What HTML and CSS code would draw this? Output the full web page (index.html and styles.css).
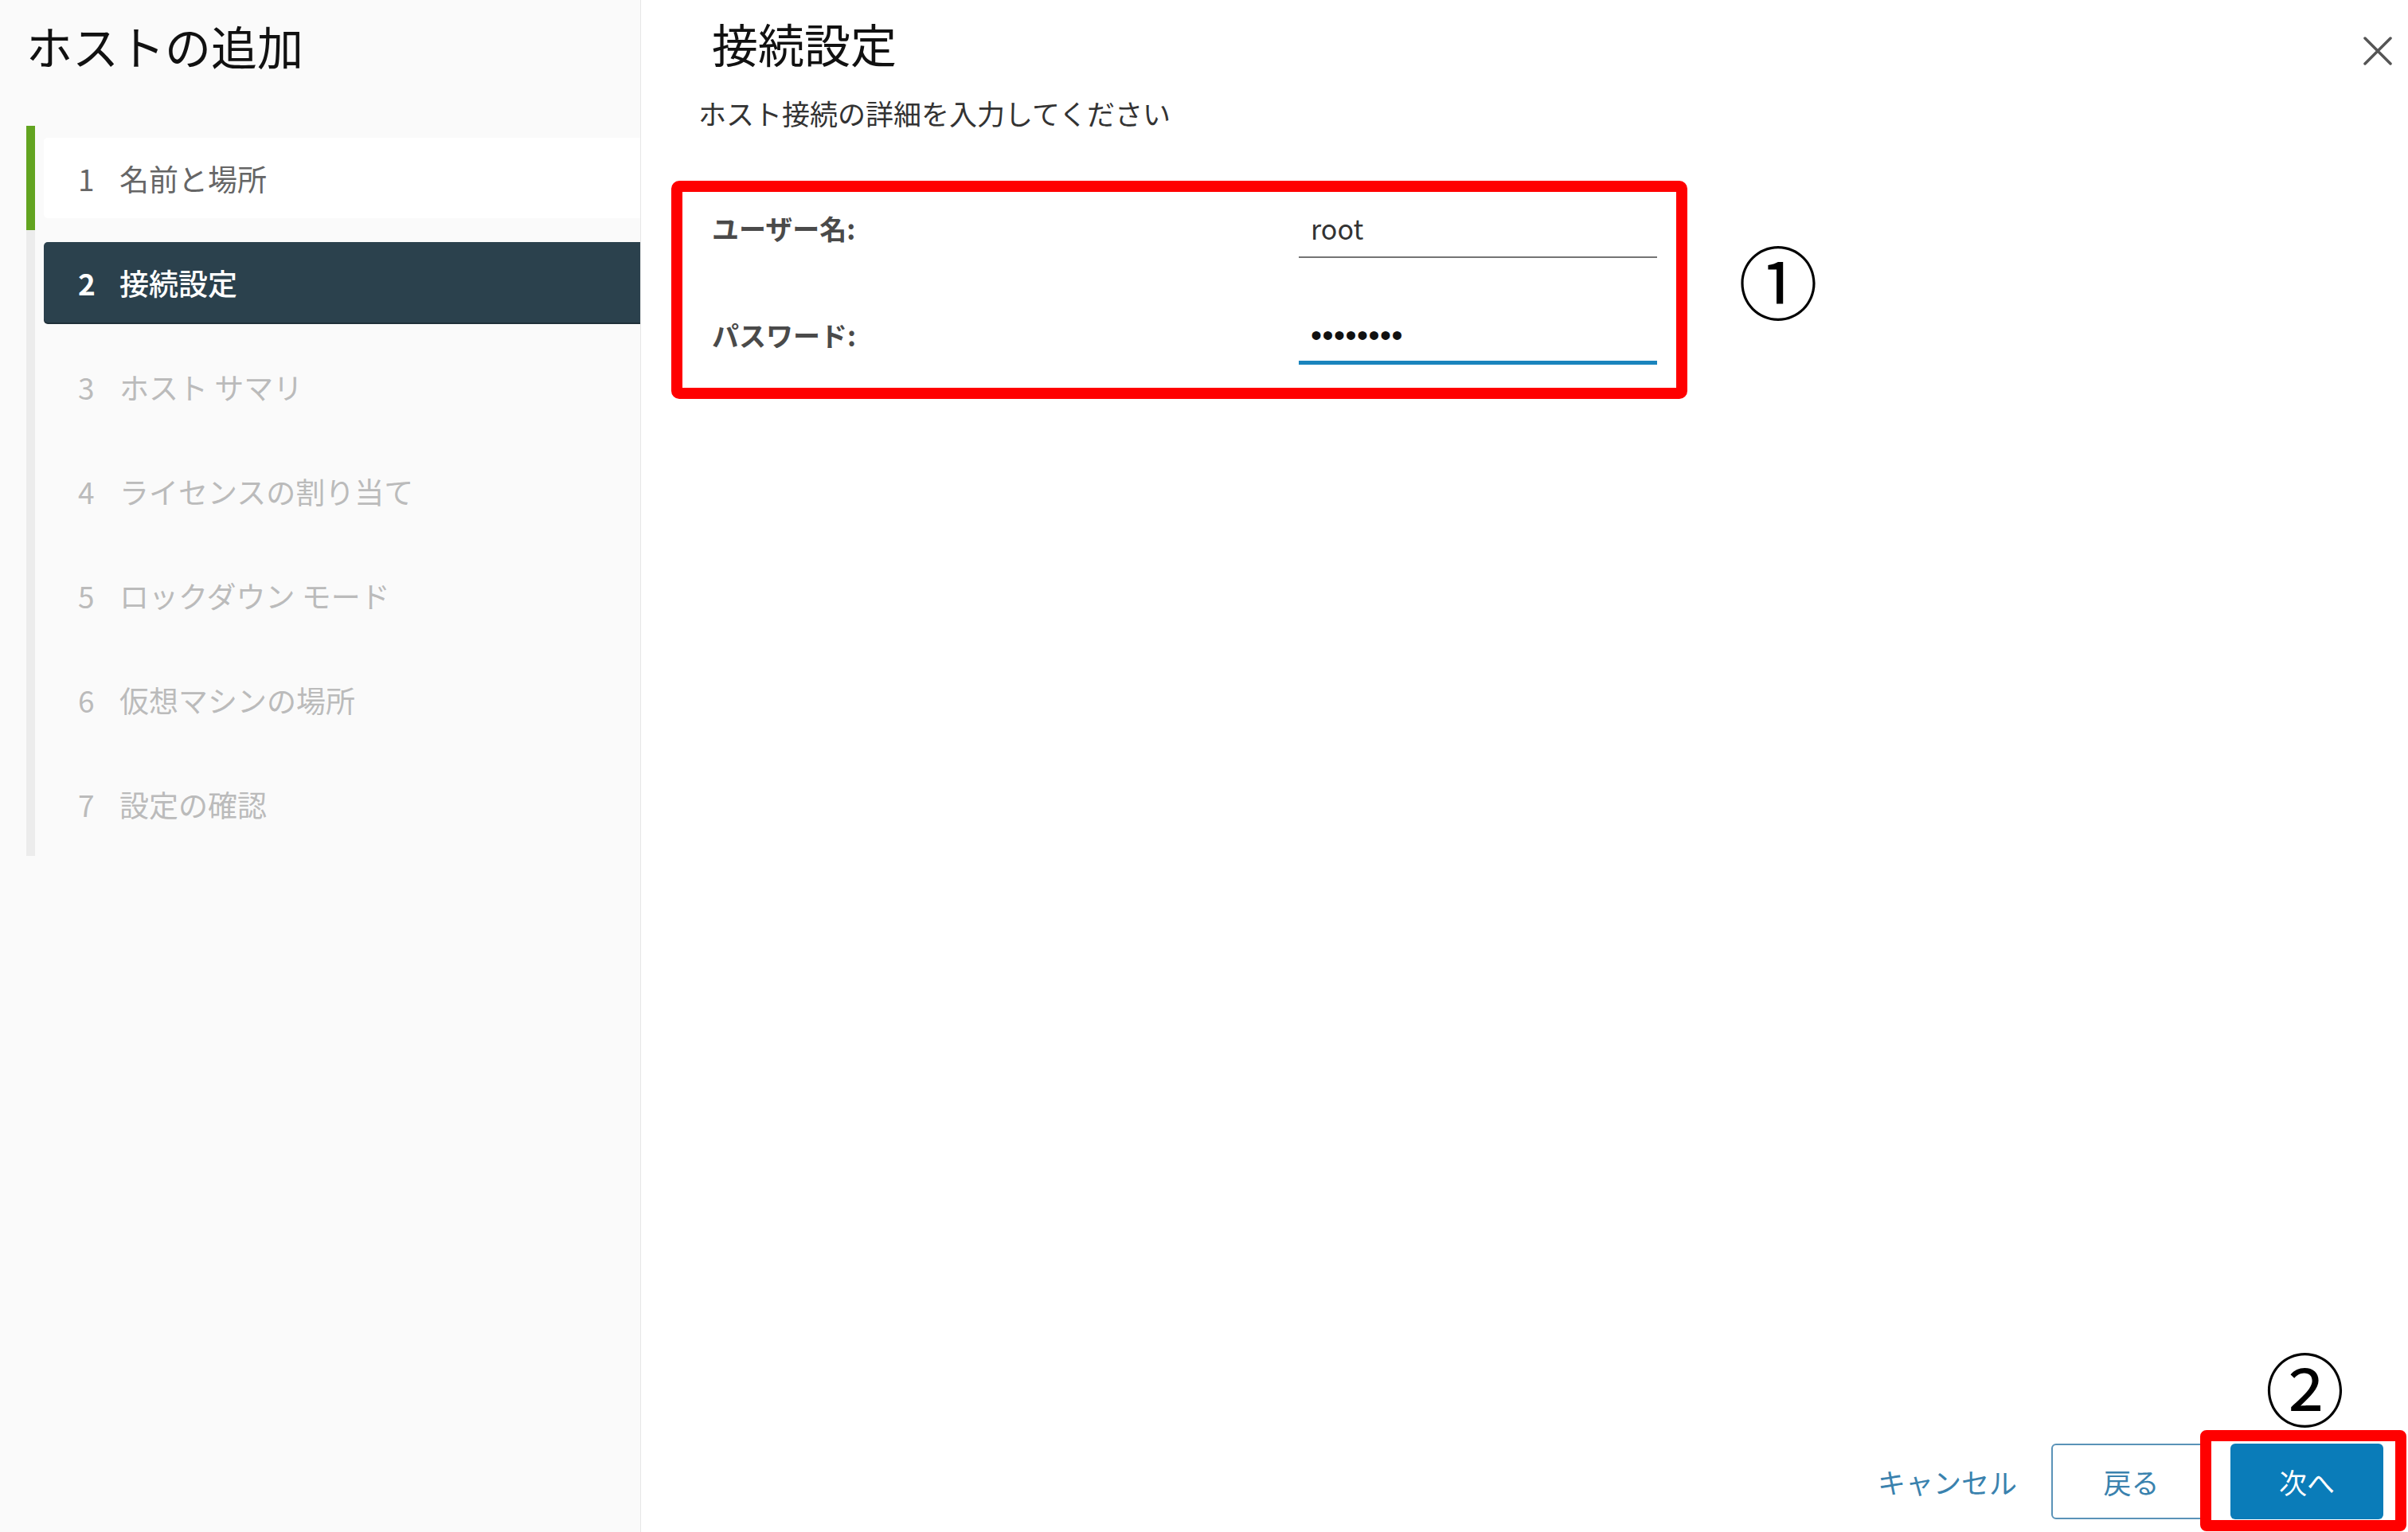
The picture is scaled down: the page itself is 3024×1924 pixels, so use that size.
FILE: index.html
```html
<!DOCTYPE html>
<html lang="ja">
<head>
<meta charset="utf-8">
<title>ホストの追加</title>
<link rel="stylesheet" href="styles.css">
</head>
<body>
<div class="app">
  <aside class="sidebar">
    <h1 class="wizard-title">ホストの追加</h1>
    <ol class="steps">
      <li class="step done"><div class="step-row"><span class="num">1</span><span class="label">名前と場所</span></div></li>
      <li class="step current"><div class="step-row"><span class="num">2</span><span class="label">接続設定</span></div></li>
      <li class="step"><div class="step-row"><span class="num">3</span><span class="label">ホスト サマリ</span></div></li>
      <li class="step"><div class="step-row"><span class="num">4</span><span class="label">ライセンスの割り当て</span></div></li>
      <li class="step"><div class="step-row"><span class="num">5</span><span class="label">ロックダウン モード</span></div></li>
      <li class="step"><div class="step-row"><span class="num">6</span><span class="label">仮想マシンの場所</span></div></li>
      <li class="step"><div class="step-row"><span class="num">7</span><span class="label">設定の確認</span></div></li>
    </ol>
  </aside>
  <main class="main">
    <header class="main-header">
      <h2 class="page-title">接続設定</h2>
      <button class="close" aria-label="閉じる">
        <svg viewBox="0 0 36 36" width="36" height="36"><path d="M2 2 L34 34 M34 2 L2 34" stroke="#555" stroke-width="3.5" stroke-linecap="round" fill="none"/></svg>
      </button>
    </header>
    <p class="subtitle">ホスト接続の詳細を入力してください</p>
    <div class="form-area">
      <div class="form-box">
        <div class="form-row">
          <label class="field-label">ユーザー名:</label>
          <div class="input">root</div>
        </div>
        <div class="form-row">
          <label class="field-label">パスワード:</label>
          <div class="input focused"><span class="dots">••••••••</span></div>
        </div>
      </div>
      <span class="callout callout-1">①</span>
    </div>
    <footer class="footer">
      <button class="btn-link">キャンセル</button>
      <button class="btn btn-outline">戻る</button>
      <div class="next-group">
        <span class="callout callout-2">②</span>
        <div class="highlight-box"><button class="btn btn-primary">次へ</button></div>
      </div>
    </footer>
  </main>
</div>
</body>
</html>
```
FILE: styles.css
```css
* { box-sizing: border-box; }
html, body { margin: 0; padding: 0; }
body {
  font-family: "Noto Sans CJK JP", "Noto Sans", sans-serif;
  background: #fff;
  color: #333;
}
button { font-family: inherit; cursor: pointer; }

.app { display: flex; height: 1924px; overflow: hidden; }

/* Sidebar */
.sidebar {
  width: 805px;
  flex: none;
  background: #fafafa;
  border-right: 1px solid #e6e6e6;
  padding-left: 33px;
}
.wizard-title {
  margin: 0;
  padding-top: 17px;
  font-size: 58px;
  line-height: 80px;
  font-weight: 400;
  color: #111;
}
.steps { list-style: none; margin: 61px 0 0; padding: 0; }
.step {
  height: 131px;
  border-left: 11px solid #ececec;
  padding: 15px 0 0 11px;
}
.step.done { border-left-color: #62a420; }
.step-row {
  height: 101px;
  display: flex;
  align-items: center;
  padding-left: 43px;
  border-radius: 5px 0 0 5px;
  font-size: 37px;
  color: #bbbbbb;
}
.num { width: 52px; flex: none; }
.done .step-row { background: #fff; color: #666; }
.current .step-row {
  background: #2b414d;
  color: #fff;
  box-shadow: 0 2px 0 #1f2f38;
}
.current .num { font-weight: 700; }
.current .label { font-weight: 500; }

/* Main */
.main {
  flex: 1;
  display: flex;
  flex-direction: column;
  padding-left: 72px;
}
.main-header {
  display: flex;
  justify-content: space-between;
  align-items: flex-start;
  padding-right: 20px;
}
.page-title {
  margin: 0 0 0 17px;
  padding-top: 14px;
  font-size: 58px;
  line-height: 80px;
  font-weight: 400;
  color: #111;
}
.close {
  margin-top: 46px;
  width: 36px;
  height: 36px;
  padding: 0;
  border: 0;
  background: none;
}
.close svg { display: block; }
.subtitle {
  margin: 23px 0 0;
  font-size: 35px;
  line-height: 50px;
  color: #333;
}

.form-area {
  display: flex;
  align-items: flex-start;
  margin-top: 60px;
  margin-left: -34px;
}
.form-box {
  width: 1276px;
  flex: none;
  border: 14px solid #ff0000;
  border-radius: 10px;
  padding: 21px 24px 29px 37px;
}
.form-row { display: flex; align-items: flex-start; }
.form-row + .form-row { margin-top: 72px; }
.field-label {
  flex: 1;
  font-size: 34px;
  line-height: 50px;
  font-weight: 700;
  color: #4a4a4a;
}
.input {
  width: 450px;
  flex: none;
  padding: 0 0 10px 15px;
  border-bottom: 2px solid #747474;
  font-size: 34px;
  line-height: 50px;
  color: #333;
}
.input.focused {
  border-bottom: 5px solid #1a84bd;
  padding-bottom: 7px;
}
.dots {
  font-family: "Liberation Sans", sans-serif;
  font-size: 40px;
  letter-spacing: 0.5px;
  color: #111;
}

.callout {
  display: block;
  width: 96px;
  height: 96px;
  font-family: "Noto Sans CJK JP", sans-serif;
  font-size: 100px;
  line-height: 96px;
  text-align: center;
  color: #000;
}
.callout-1 { margin-left: 64px; margin-top: 76px; }
.callout-2 { margin-bottom: 7px; }

/* Footer */
.footer {
  margin-top: auto;
  display: flex;
  justify-content: flex-end;
  align-items: flex-end;
  padding-right: 2px;
  padding-bottom: 1px;
}
.btn-link {
  margin: 0 43px 37px 0;
  padding: 0;
  border: 0;
  background: none;
  font-size: 35px;
  line-height: 50px;
  color: #3a82ae;
}
.btn {
  height: 95px;
  border-radius: 6px;
  font-size: 35px;
  padding: 0;
}
.btn-outline {
  width: 201px;
  margin: 0 -14px 15px 0;
  border: 2px solid #5a93b8;
  background: #fff;
  color: #3a82ae;
}
.next-group {
  display: flex;
  flex-direction: column;
  align-items: center;
}
.highlight-box {
  width: 259px;
  border: 14px solid #ff0000;
  border-radius: 8px;
  padding: 3px 15px 1px 24px;
  background: #fff;
}
.btn-primary {
  display: block;
  width: 192px;
  border: 0;
  background: #0a7cb9;
  color: #fff;
}
```
